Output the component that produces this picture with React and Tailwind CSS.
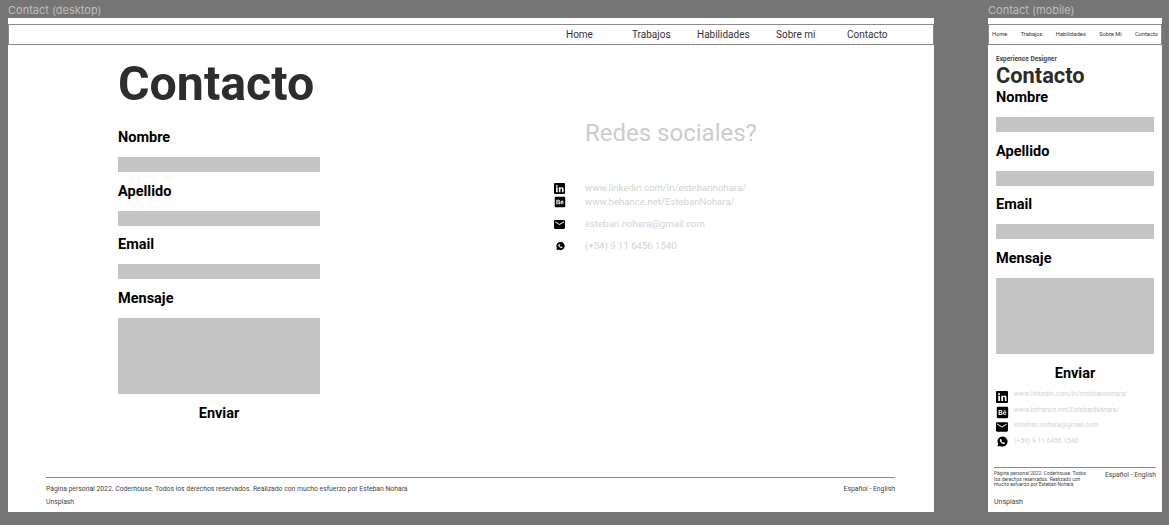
import React from "react";
import { FaBehanceSquare } from "react-icons/fa";

const navDesktop = [
  ["Home", "w-[26px] ml-[557px]"],
  ["Trabajos", "w-[37px] ml-[40px]"],
  ["Habilidades", "w-[51px] ml-[28px]"],
  ["Sobre mi", "w-[38px] ml-[28px]"],
  ["Contacto", "w-[39px] ml-[33px]"],
];

const LinkedinIcon = ({ size }) => (
  <svg width={size} height={size} viewBox="0 0 24 24" fill="currentColor">
    <path fillRule="evenodd" d="M2 0h20a2 2 0 0 1 2 2v20a2 2 0 0 1-2 2H2a2 2 0 0 1-2-2V2a2 2 0 0 1 2-2zm2.500 9.500V20H8V9.500H4.500zM6.200 4.200a2 2 0 1 0 0 4 2 2 0 0 0 0-4zM10.500 9.500V20H14v-5.500c0-1.600.7-2.400 1.900-2.400 1.200 0 1.700.8 1.700 2.400V20H21v-6.300c0-3-1.500-4.500-3.800-4.500-1.500 0-2.600.7-3.200 1.700V9.500h-3.500z" />
  </svg>
);

const MailIcon = ({ size }) => (
  <svg width={size} height={size} viewBox="2 2 20 20" fill="currentColor">
    <path d="M20 4H4c-1.100 0-1.990.9-1.990 2L2 18c0 1.100.9 2 2 2h16c1.100 0 2-.9 2-2V6c0-1.100-.9-2-2-2zm0 4l-8 5-8-5V6l8 5 8-5v2z" />
  </svg>
);

const WhatsappIcon = ({ size }) => (
  <svg width={size} height={size} viewBox="0 0 24 24" fill="currentColor">
    <path fillRule="evenodd" d="M12 1a11 11 0 1 1-5.300 20.600L1 23l1.500-5.500A11 11 0 0 1 12 1zM8.300 6.500c-.4 0-.9.200-1.300.7-.6.700-1 1.500-1 2.600 0 1.500 1 3 2.900 4.900 1.900 1.800 3.700 2.800 5.300 2.800 1.200 0 2.200-.6 2.800-1.400.3-.5.400-1 .3-1.500l-2.400-1.200c-.3-.1-.5 0-.7.200l-.9 1.100c-1.700-.6-3.200-2.100-3.900-3.700l.8-.9c.2-.3.200-.5.100-.8l-1-2.300c-.1-.3-.5-.5-1-.5z" />
  </svg>
);

const Field = ({ label, tall }) => (
  <div>
    <p className="text-[14.5px] leading-[18px] font-bold text-black">{label}</p>
    <div className={`mt-[10px] bg-[#c4c4c4] ${tall ? "h-[76px]" : "h-[15px]"}`} />
  </div>
);

const Desktop = () => (
  <div className="w-[926px] shrink-0">
    <p className="h-[18px] pt-[3px] text-[11px] leading-[14px] text-[#bdbdbd] font-['Inter',sans-serif]">Contact (desktop)</p>
    <div className="flex h-[494px] flex-col bg-white">
      <nav className="mt-[6px] flex h-[21px] items-center border border-[#8a8a8a] text-[10px] text-[#333]">
        {navDesktop.map(([name, cls]) => (
          <span key={name} className={`${cls} whitespace-nowrap`}>{name}</span>
        ))}
      </nav>

      <div className="flex flex-1">
        <div className="ml-[110px] w-[202px]">
          <h1 className="mt-[11px] text-[48.3px] leading-[56px] font-bold text-[#2d2d2d] whitespace-nowrap">Contacto</h1>
          <div className="mt-[17px] flex flex-col gap-[10.67px]">
            <Field label="Nombre" />
            <Field label="Apellido" />
            <Field label="Email" />
            <Field label="Mensaje" tall />
          </div>
          <p className="mt-[11px] text-center text-[14.5px] leading-[18px] font-bold text-black">Enviar</p>
        </div>

        <div className="ml-[234px]">
          <h2 className="mt-[74px] ml-[31px] text-[24px] leading-[28px] text-[#cccccc] whitespace-nowrap">Redes sociales?</h2>
          <div className="mt-[34px] text-[9.6px] text-[#d2d2d2]">
            <div className="flex h-[14px] items-center gap-[20px]">
              <span className="w-[11px] text-black"><LinkedinIcon size={11} /></span>
              <span>www.linkedin.com/in/estebannohara/</span>
            </div>
            <div className="flex h-[14px] items-center gap-[20px]">
              <span className="w-[11px] text-black"><FaBehanceSquare size={12} /></span>
              <span>www.behance.net/EstebanNohara/</span>
            </div>
            <div className="mt-[8px] flex h-[14px] items-center gap-[20px]">
              <span className="w-[11px] text-black"><MailIcon size={11} /></span>
              <span>esteban.nohara@gmail.com</span>
            </div>
            <div className="mt-[8px] flex h-[14px] items-center gap-[20px]">
              <span className="flex w-[11px] justify-center pl-[2px] text-black"><WhatsappIcon size={10} /></span>
              <span>(+54) 9 11 6456 1540</span>
            </div>
          </div>
        </div>
      </div>

      <footer className="ml-[38px] mr-[39px] h-[35px] border-t border-[#8a8a8a] text-[6.8px] leading-[9px] text-[#444]">
        <div className="flex justify-between pt-[7px]">
          <span>Página personal 2022. Coderhouse. Todos los derechos reservados. Realizado con mucho esfuerzo por Esteban Nohara</span>
          <span>Español - English</span>
        </div>
        <p className="mt-[4px]">Unsplash</p>
      </footer>
    </div>
  </div>
);

const Mobile = () => (
  <div className="w-[174px] shrink-0">
    <p className="h-[18px] pt-[3px] text-[11px] leading-[14px] text-[#bdbdbd] font-['Inter',sans-serif]">Contact (mobile)</p>
    <div className="flex h-[494px] flex-col bg-white">
      <nav className="mt-[6px] flex h-[21px] items-center justify-between border border-[#8a8a8a] px-[3px] text-[5.7px] text-[#333]">
        <span>Home</span>
        <span>Trabajos</span>
        <span>Habilidades</span>
        <span>Sobre Mi</span>
        <span>Contacto</span>
      </nav>

      <div className="flex-1 px-[8px]">
        <p className="mt-[10px] text-[6.6px] leading-[8px] font-bold text-[#444]">Experience Designer</p>
        <h1 className="text-[21.8px] leading-[26px] font-bold text-[#2d2d2d]">Contacto</h1>
        <div className="flex flex-col gap-[10.67px]">
          <Field label="Nombre" />
          <Field label="Apellido" />
          <Field label="Email" />
          <Field label="Mensaje" tall />
        </div>
        <p className="mt-[11px] text-center text-[14.5px] leading-[18px] font-bold text-black">Enviar</p>

        <div className="mt-[8px] flex gap-[6px]">
          <div className="flex w-[12px] flex-col gap-[3px] text-black">
            <span className="h-[12px]"><LinkedinIcon size={12} /></span>
            <span className="h-[12px]"><FaBehanceSquare size={13} /></span>
            <span className="h-[12px]"><MailIcon size={12} /></span>
            <span className="flex h-[12px] items-center justify-center"><WhatsappIcon size={11} /></span>
          </div>
          <div className="-mt-[1.5px] flex flex-col gap-[4.5px] text-[6.75px] leading-[11px] text-[#d2d2d2]">
            <span>www.linkedin.com/in/estebannohara/</span>
            <span>www.behance.net/EstebanNohara/</span>
            <span>esteban.nohara@gmail.com</span>
            <span>(+54) 9 11 6456 1540</span>
          </div>
        </div>
      </div>

      <footer className="mx-[6px] h-[45px] border-t border-[#8a8a8a] text-[#444]">
        <div className="flex justify-between pt-[3px]">
          <p className="w-[96px] text-[4.9px] leading-[5.5px]">Página personal 2022. Coderhouse. Todos los derechos reservados. Realizado con mucho esfuerzo por Esteban Nohara</p>
          <span className="text-[6.75px] leading-[9px] whitespace-nowrap">Español - English</span>
        </div>
        <p className="mt-[10.5px] text-[7px] leading-[9px]">Unsplash</p>
      </footer>
    </div>
  </div>
);

export default function App() {
  return (
    <div className="flex h-[525px] w-[1169px] gap-[54px] overflow-hidden bg-[#757575] pl-[8px] font-['Roboto',sans-serif]">
      <Desktop />
      <Mobile />
    </div>
  );
}
